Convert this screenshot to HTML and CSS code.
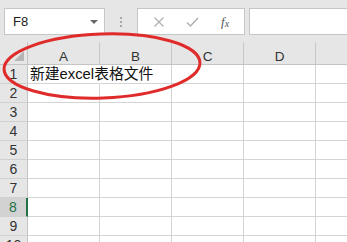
FILE: index.html
```html
<!DOCTYPE html>
<html>
<head>
<meta charset="utf-8">
<link rel="stylesheet" href="styles.css">
</head>
<body>
<div class="app">
  <div class="toolbar">
    <div class="namebox"><span class="name">F8</span><span class="caret"></span></div>
    <div class="sep"><span></span><span></span><span></span></div>
    <div class="fbuttons">
      <svg class="ic" width="12" height="12" viewBox="0 0 12 12"><path d="M1.5 1.5 L10.5 10.5 M10.5 1.5 L1.5 10.5" stroke="#b0b0b0" stroke-width="1.3" fill="none"/></svg>
      <svg class="ic" width="13" height="12" viewBox="0 0 13 12"><path d="M1 6.5 L4.5 10 L12 2" stroke="#b0b0b0" stroke-width="1.5" fill="none"/></svg>
      <span class="fx">f<sub>x</sub></span>
    </div>
    <div class="finput"></div>
  </div>
  <div class="sheet">
    <div class="corner"><span class="tri"></span></div>
    <div class="ch">A</div><div class="ch">B</div><div class="ch">C</div><div class="ch">D</div><div class="ch last"></div>

    <div class="rh">1</div><div class="c text">新建excel表格文件</div><div class="c"></div><div class="c"></div><div class="c"></div><div class="c"></div>
    <div class="rh">2</div><div class="c"></div><div class="c"></div><div class="c"></div><div class="c"></div><div class="c"></div>
    <div class="rh">3</div><div class="c"></div><div class="c"></div><div class="c"></div><div class="c"></div><div class="c"></div>
    <div class="rh">4</div><div class="c"></div><div class="c"></div><div class="c"></div><div class="c"></div><div class="c"></div>
    <div class="rh">5</div><div class="c"></div><div class="c"></div><div class="c"></div><div class="c"></div><div class="c"></div>
    <div class="rh">6</div><div class="c"></div><div class="c"></div><div class="c"></div><div class="c"></div><div class="c"></div>
    <div class="rh">7</div><div class="c"></div><div class="c"></div><div class="c"></div><div class="c"></div><div class="c"></div>
    <div class="rh sel">8</div><div class="c"></div><div class="c"></div><div class="c"></div><div class="c"></div><div class="c"></div>
    <div class="rh">9</div><div class="c"></div><div class="c"></div><div class="c"></div><div class="c"></div><div class="c"></div>
    <div class="rh">10</div><div class="c"></div><div class="c"></div><div class="c"></div><div class="c"></div><div class="c"></div>
  </div>
  <svg class="mark" width="347" height="242" viewBox="0 0 347 242">
    <ellipse cx="102" cy="66" rx="98" ry="32" transform="rotate(-2 102 66)" fill="none" stroke="#e02b2b" stroke-width="3"/>
  </svg>
</div>
</body>
</html>
```

FILE: styles.css
```css
html, body {
  margin: 0;
  padding: 0;
  background: #ffffff;
  overflow: hidden;
}
.app {
  position: relative;
  width: 347px;
  height: 242px;
  overflow: hidden;
  font-family: "Liberation Sans", "Noto Sans CJK SC", sans-serif;
}
.toolbar {
  height: 42px;
  background: #e6e6e6;
  display: flex;
  align-items: flex-start;
  padding: 8px 0 0 4px;
  box-sizing: border-box;
}
.namebox {
  width: 101px;
  height: 27px;
  box-sizing: border-box;
  background: #fff;
  border: 1px solid #c6c6c6;
  display: flex;
  align-items: center;
  justify-content: space-between;
  padding: 0 6px 0 8px;
}
.name {
  font-size: 13px;
  color: #222;
}
.caret {
  width: 0;
  height: 0;
  border-left: 4px solid transparent;
  border-right: 4px solid transparent;
  border-top: 4px solid #6a6a6a;
}
.sep {
  width: 32px;
  height: 27px;
  display: flex;
  flex-direction: column;
  align-items: center;
  justify-content: center;
  gap: 2px;
}
.sep span {
  width: 2px;
  height: 2px;
  background: #a8a8a8;
}
.fbuttons {
  width: 108px;
  height: 27px;
  box-sizing: border-box;
  background: #fff;
  border: 1px solid #c6c6c6;
  display: flex;
  align-items: center;
  justify-content: space-around;
  padding: 0 4px;
}
.fx {
  font-family: "Liberation Serif", serif;
  font-style: italic;
  font-size: 13px;
  color: #555;
}
.fx sub {
  font-size: 10px;
  vertical-align: -1px;
}
.finput {
  margin-left: 4px;
  flex: 1;
  height: 27px;
  box-sizing: border-box;
  background: #fff;
  border: 1px solid #c6c6c6;
  border-right: none;
}
.sheet {
  display: grid;
  grid-template-columns: 28px 72px 72px 72px 72px 72px;
  grid-template-rows: 23px repeat(10, 19px);
}
.sheet > div {
  box-sizing: border-box;
}
.corner {
  background: #e6e6e6;
  border-right: 1px solid #c4c4c4;
  border-bottom: 1px solid #c4c4c4;
  position: relative;
}
.tri {
  position: absolute;
  right: 3px;
  bottom: 3px;
  width: 0;
  height: 0;
  border-left: 10px solid transparent;
  border-bottom: 10px solid #b5b5b5;
}
.ch {
  background: #e6e6e6;
  border-right: 1px solid #c8c8c8;
  border-bottom: 1px solid #c4c4c4;
  font-size: 13.5px;
  color: #333;
  text-align: center;
  line-height: 14px;
  padding-top: 8px;
}
.rh {
  background: #e6e6e6;
  border-right: 1px solid #c4c4c4;
  border-bottom: 1px solid #d0d0d0;
  font-size: 14px;
  color: #333;
  text-align: center;
  line-height: 19px;
}
.rh.sel {
  background: #d2d2d2;
  color: #217346;
  border-right: 2px solid #217346;
}
.c {
  border-right: 1px solid #d4d4d4;
  border-bottom: 1px solid #d4d4d4;
}
.c.text {
  font-size: 14.8px;
  color: #111;
  white-space: nowrap;
  overflow: visible;
  line-height: 19px;
  padding-left: 2px;
  border-right-color: transparent;
}
.mark {
  position: absolute;
  left: 0;
  top: 0;
  pointer-events: none;
}
```
